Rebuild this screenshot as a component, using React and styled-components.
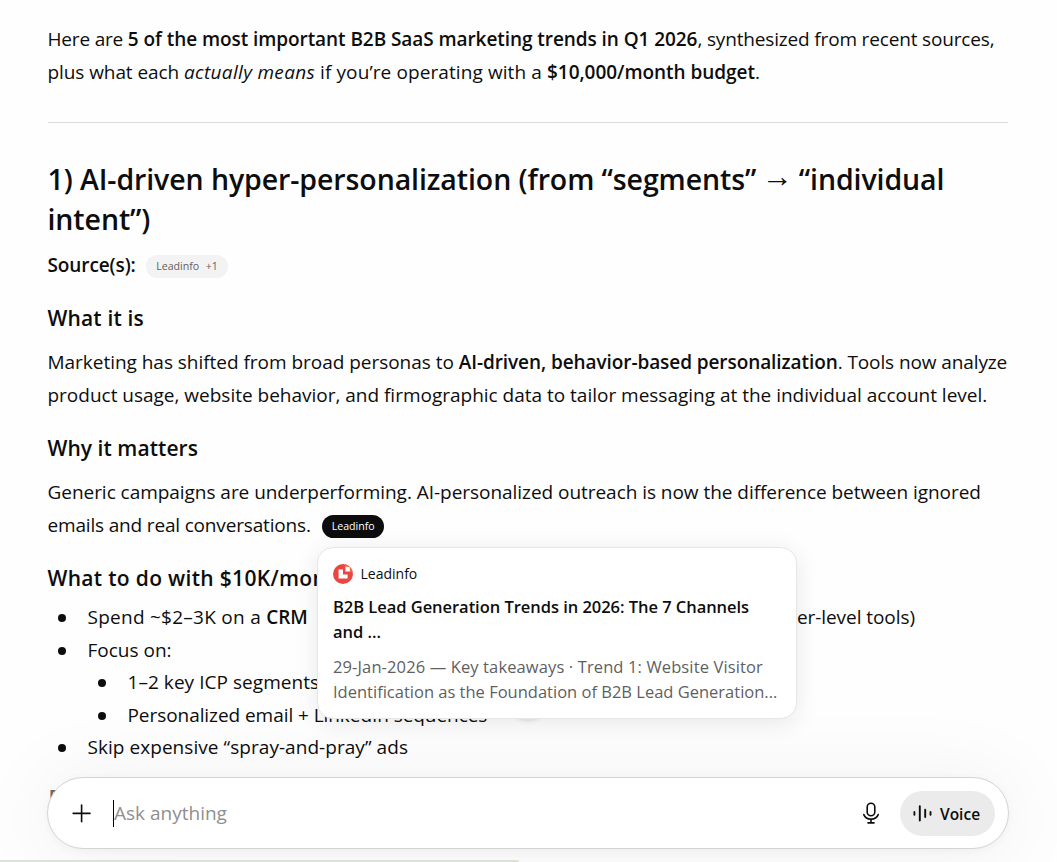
import React from 'react';
import styled, { createGlobalStyle } from 'styled-components';

const colors = {
  text: '#0d0d0d',
  muted: '#5f5f5f',
  placeholder: '#8f8f8f',
  line: '#dcdcdc',
  pill: '#f3f3f3',
  voice: '#ebebeb',
};

const GlobalStyle = createGlobalStyle`
  body {
    margin: 0;
    background: #fefefe;
    color: ${colors.text};
    font-family: 'Open Sans', 'Noto Sans', sans-serif;
    font-size: 19px;
    line-height: 33px;
  }
`;

const Screen = styled.div`
  position: relative;
  height: 862px;
  overflow: hidden;
`;

const Article = styled.article`
  width: 970px;
  padding: 23px 0 0 47.5px;
  white-space: nowrap;
`;

const Run = styled.span`
  letter-spacing: ${(p) => p.$track || 0}px;
`;

const Strong = styled(Run).attrs({ as: 'strong' })`
  font-weight: 600;
`;

const Em = styled(Run).attrs({ as: 'em' })`
  font-style: italic;
`;

const Line = styled.div`
  letter-spacing: ${(p) => p.$track || 0}px;
`;

const Paragraph = styled.div`
  margin-bottom: ${(p) => p.$gap || 0}px;
`;

const Divider = styled.hr`
  width: 960px;
  height: 1px;
  margin: 33px 0 36px;
  border: 0;
  background: ${colors.line};
`;

const Title = styled.h2`
  margin: 0 0 10px;
  font-size: 28.5px;
  font-weight: 600;
  line-height: 40px;
  letter-spacing: -0.09px;
`;

const Arrow = styled.span`
  margin: 0 -1.5px;
  font-size: 31px;
  line-height: 0;
  vertical-align: 3px;
`;

const Heading = styled.h3`
  margin: 0 0 ${(p) => p.$gap}px;
  font-size: 21px;
  font-weight: 600;
  line-height: 30px;
  letter-spacing: ${(p) => p.$track || 0}px;
`;

const Sources = styled.div`
  display: flex;
  align-items: center;
  height: 33px;
  margin-bottom: 21px;

  > span {
    margin-top: 1px;
  }
`;

const Pill = styled.span`
  display: inline-flex;
  align-items: center;
  gap: 6.5px;
  height: 23px;
  box-sizing: border-box;
  padding: 0 ${(p) => (p.$active ? 9.5 : 10)}px;
  margin-left: 10.5px;
  border-radius: 12px;
  background: ${(p) => (p.$active ? colors.text : colors.pill)};
  color: ${(p) => (p.$active ? '#fff' : colors.muted)};
  font-size: 10.6px;
  line-height: 23px;
`;

const CitedLine = styled.div`
  display: flex;
  align-items: center;
  height: 33px;
  letter-spacing: -0.17px;

  ${Pill} {
    margin: 2px 0 0 11.5px;
    letter-spacing: 0;
  }
`;

const List = styled.ul`
  margin: 0;
  padding: 0 0 0 40px;
  list-style: none;
  line-height: 32.5px;
`;

const Item = styled.li`
  position: relative;
  letter-spacing: ${(p) => p.$track || 0}px;

  &::before {
    content: '';
    position: absolute;
    left: -29.5px;
    top: 13px;
    width: 8px;
    height: 8px;
    border-radius: 50%;
    background: ${colors.text};
  }
`;

const NextHeading = styled(Heading)`
  margin: 19px 0 0 1px;
  color: #6d6d6d;
`;

const ScrollButton = styled.div`
  position: absolute;
  left: 510px;
  top: 685px;
  width: 36px;
  height: 36px;
  border-radius: 50%;
  background: #eee;
  box-shadow: 0 0 4px rgba(0, 0, 0, 0.1);
`;

const Card = styled.div`
  position: absolute;
  left: 317px;
  top: 547px;
  width: 480px;
  height: 172px;
  box-sizing: border-box;
  padding: 13px 15px;
  border: 1px solid #e6e6e6;
  border-radius: 16px;
  background: #fff;
  box-shadow: 0 4px 24px rgba(0, 0, 0, 0.09);
  font-size: 16.5px;
  line-height: 25px;
  white-space: nowrap;
`;

const CardSite = styled.div`
  display: flex;
  align-items: center;
  gap: 7.5px;
  height: 25px;
  font-size: 14px;
`;

const CardTitle = styled.div`
  margin-top: 8px;
  font-weight: 600;
  letter-spacing: -0.04px;
`;

const CardText = styled.div`
  margin-top: 10px;
  color: ${colors.muted};
`;

const Composer = styled.div`
  position: absolute;
  left: 47px;
  top: 777px;
  display: flex;
  align-items: center;
  width: 962px;
  height: 72px;
  box-sizing: border-box;
  padding: 0 13px 0 23px;
  border: 1px solid #d4d4d4;
  border-radius: 36px;
  background: #fff;
  box-shadow: 0 4px 80px 8px rgba(0, 0, 0, 0.05), 0 2px 8px rgba(0, 0, 0, 0.04);
`;

const Placeholder = styled.div`
  flex: 1;
  height: 27px;
  margin-left: 20px;
  border-left: 1px solid #000;
  color: ${colors.placeholder};
  line-height: 27px;
`;

const VoiceButton = styled.div`
  display: flex;
  align-items: center;
  gap: 8px;
  width: 95px;
  height: 45px;
  box-sizing: border-box;
  padding: 2px 0 0 13px;
  margin-left: 20.5px;
  border-radius: 23px;
  background: ${colors.voice};
  font-size: 15.5px;
  font-weight: 600;
`;

const StatusBar = styled.div`
  position: absolute;
  left: 0;
  bottom: 0;
  width: 519px;
  height: 2px;
  border-top-right-radius: 3px;
  background: #dbe2d7;
`;

function LeadinfoLogo() {
  return (
    <svg width="20" height="20" viewBox="0 0 20 20">
      <circle cx="10" cy="10" r="10" fill="#ea4640" />
      <path d="M12 0.3A10 10 0 0 1 19.7 8L12 8Z" fill="#f26a45" />
      <path d="M5.6 5.6H10V10.5H14.6V14.6H5.6Z" fill="#fff" />
      <path d="M12.5 2.8H16.8V7.4H12.5Z" fill="#fff" />
    </svg>
  );
}

function PlusIcon() {
  return (
    <svg width="22" height="22" viewBox="0 0 22 22" stroke="#0d0d0d" strokeWidth="1.6" strokeLinecap="round">
      <path d="M2.2 11.4H19M10.6 3V19.8" />
    </svg>
  );
}

function MicIcon() {
  return (
    <svg width="18" height="22" viewBox="0 0 18 22" fill="none" stroke="#0d0d0d" strokeWidth="1.6" strokeLinecap="round">
      <rect x="5.2" y="1.2" width="7.6" height="12.6" rx="3.8" />
      <path d="M1.8 12.6C2.9 15.5 5.6 17.2 9 17.2S15.1 15.5 16.2 12.6" />
      <path d="M9 17.2V20.8M6 20.9H12" />
    </svg>
  );
}

function WaveIcon() {
  return (
    <svg width="19" height="18" viewBox="0 0 19 18" stroke="#0d0d0d" strokeWidth="1.9" strokeLinecap="round">
      <path d="M1.4 7V9.8M6.8 1.3V15.5M12.2 4.8V12M17.5 7V9.8" />
    </svg>
  );
}

export default function App() {
  return (
    <Screen>
      <GlobalStyle />
      <Article>
        <Paragraph>
          <Line>
            <Run $track={-0.18}>Here are </Run>
            <Strong $track={-0.07}>5 of the most important B2B SaaS marketing trends in Q1 2026</Strong>
            <Run $track={-0.16}>, synthesized from recent sources,</Run>
          </Line>
          <Line>
            <Run $track={-0.08}>plus what each </Run>
            <Em $track={0.33}>actually means</Em>
            <Run $track={0.1}> if you’re operating with a </Run>
            <Strong $track={-0.04}>$10,000/month budget</Strong>.
          </Line>
        </Paragraph>
        <Divider />
        <Title>
          1) AI-driven hyper-personalization (from “segments” <Arrow>→</Arrow> “individual
          <br />
          intent”)
        </Title>
        <Sources>
          <Strong $track={-0.1}>Source(s):</Strong>
          <Pill>
            <span>Leadinfo</span>
            <span>+1</span>
          </Pill>
        </Sources>
        <Heading $gap={13} $track={0.15}>What it is</Heading>
        <Paragraph $gap={21}>
          <Line>
            <Run $track={-0.03}>Marketing has shifted from broad personas to </Run>
            <Strong $track={-0.08}>AI-driven, behavior-based personalization</Strong>
            <Run $track={-0.1}>. Tools now analyze</Run>
          </Line>
          <Line $track={-0.01}>
            product usage, website behavior, and firmographic data to tailor messaging at the individual account level.
          </Line>
        </Paragraph>
        <Heading $gap={13} $track={0.05}>Why it matters</Heading>
        <Paragraph $gap={21}>
          <Line $track={-0.04}>
            Generic campaigns are underperforming. AI-personalized outreach is now the difference between ignored
          </Line>
          <CitedLine>
            emails and real conversations.
            <Pill $active>Leadinfo</Pill>
          </CitedLine>
        </Paragraph>
        <Heading $gap={8} $track={0.32}>What to do with $10K/month</Heading>
        <List>
          <Item>
            <Run $track={0.26}>Spend ~$2–3K on a </Run>
            <Strong>CRM</Strong>
            <Run $track={5}> </Run>
            <Strong $track={-0.18}>+ AI personalization stack</Strong>
            <Run $track={-0.06}> (HubSpot + Clay + n8n, starter-level tools)</Run>
          </Item>
          <Item>
            Focus on:
            <List>
              <Item $track={0.05}>1–2 key ICP segments</Item>
              <Item $track={-0.06}>Personalized email + LinkedIn sequences</Item>
            </List>
          </Item>
          <Item $track={0.05}>Skip expensive “spray-and-pray” ads</Item>
        </List>
        <NextHeading $gap={0}>Example</NextHeading>
      </Article>
      <ScrollButton />
      <Composer>
        <PlusIcon />
        <Placeholder>Ask anything</Placeholder>
        <MicIcon />
        <VoiceButton>
          <WaveIcon />
          Voice
        </VoiceButton>
      </Composer>
      <Card>
        <CardSite>
          <LeadinfoLogo />
          Leadinfo
        </CardSite>
        <CardTitle>
          B2B Lead Generation Trends in 2026: The 7 Channels
          <br />
          and ...
        </CardTitle>
        <CardText>
          <Line $track={0.12}>29-Jan-2026 — Key takeaways · Trend 1: Website Visitor</Line>
          <Line>Identification as the Foundation of B2B Lead Generation...</Line>
        </CardText>
      </Card>
      <StatusBar />
    </Screen>
  );
}
